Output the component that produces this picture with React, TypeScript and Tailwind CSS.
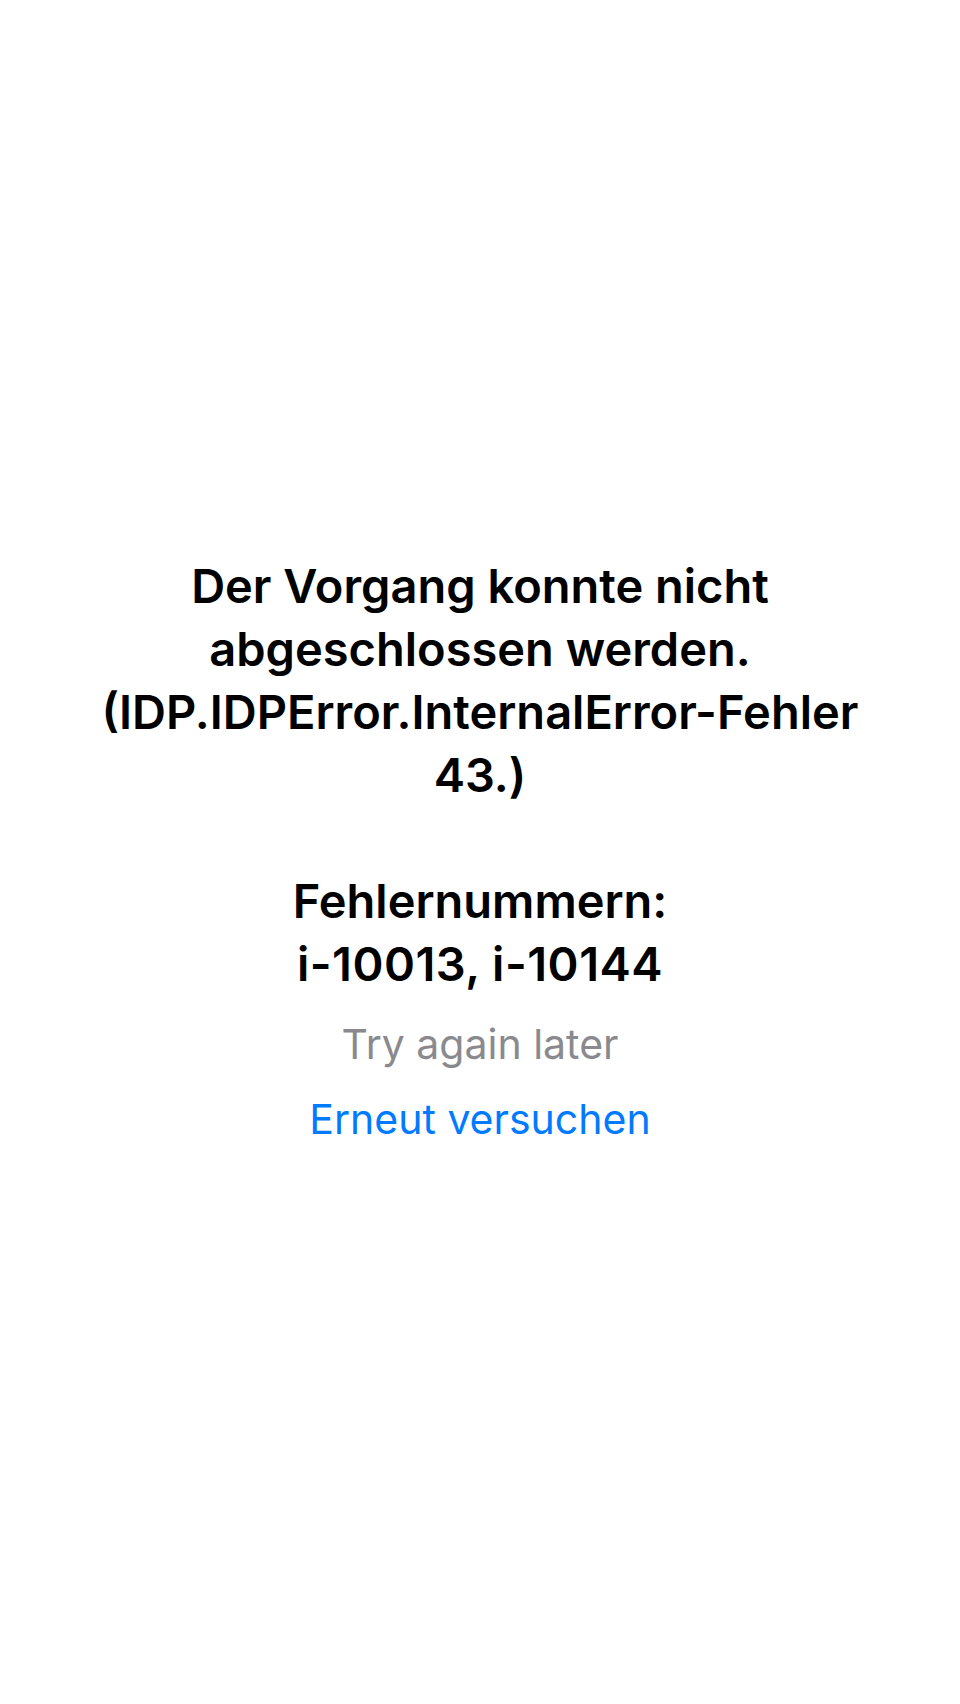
import React from "react";

export default function App() {
  return (
    <div
      className="w-[960px] h-[1704px] bg-white flex flex-col items-center"
      style={{ fontFamily: "Inter, 'Noto Sans', sans-serif" }}
    >
      <div className="pt-[554px] text-center font-semibold text-[47px] leading-[63px] text-black">
        Der Vorgang konnte nicht
        <br />
        abgeschlossen werden.
        <br />
        (IDP.IDPError.InternalError-Fehler
        <br />
        43.)
        <br />
        <br />
        Fehlernummern:
        <br />
        <span className="tracking-[0.5px]">i-10013, i-10144</span>
      </div>
      <div className="mt-[24px] text-[41px] leading-[50px] text-[#8a8a8e]">Try again later</div>
      <div className="mt-[25px] text-[41px] leading-[50px] text-[#007aff]">Erneut versuchen</div>
    </div>
  );
}
